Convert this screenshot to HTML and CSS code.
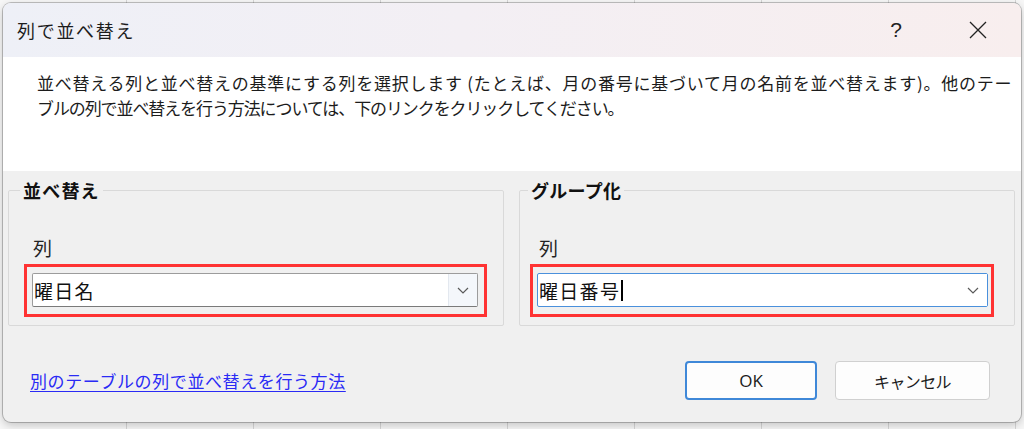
FILE: index.html
```html
<!DOCTYPE html>
<html lang="ja">
<head>
<meta charset="utf-8">
<title>列で並べ替え</title>
<link rel="stylesheet" href="styles.css">
</head>
<body>
<div class="screen">
  <div class="dialog">
    <div class="titlebar">
      <span class="title">列で並べ替え</span>
      <span class="help">?</span>
      <span class="close">
        <svg width="18" height="18" viewBox="0 0 18 18"><path d="M1 1 L17 17 M17 1 L1 17" stroke="#222" stroke-width="1.3" fill="none"/></svg>
      </span>
    </div>
    <div class="desc">
      <p>並べ替える列と並べ替えの基準にする列を選択します (たとえば、月の番号に基づいて月の名前を並べ替えます)。他のテー<br><span class="tight">ブルの列で並べ替えを行う方法については、下のリンクをクリックしてください。</span></p>
    </div>
    <div class="body">
      <div class="groups">
        <section class="group group-sort">
          <h2 class="group-title">並べ替え</h2>
          <div class="field-label">列</div>
          <div class="highlight">
            <div class="combo">
              <span class="combo-text">曜日名</span>
              <span class="combo-btn">
                <svg width="12" height="7" viewBox="0 0 12 7"><polyline points="1,1 6,6 11,1" stroke="#5a5a5a" stroke-width="1.2" fill="none"/></svg>
              </span>
            </div>
          </div>
        </section>
        <section class="group group-by">
          <h2 class="group-title">グループ化</h2>
          <div class="field-label">列</div>
          <div class="highlight">
            <div class="combo combo-focus">
              <span class="combo-text">曜日番号<span class="caret"></span></span>
              <span class="combo-btn">
                <svg width="12" height="7" viewBox="0 0 12 7"><polyline points="1,1 6,6 11,1" stroke="#5a5a5a" stroke-width="1.2" fill="none"/></svg>
              </span>
            </div>
          </div>
        </section>
      </div>
      <div class="footer">
        <a class="link" href="#">別のテーブルの列で並べ替えを行う方法</a>
        <div class="buttons">
          <button class="btn btn-ok">OK</button>
          <button class="btn btn-cancel">キャンセル</button>
        </div>
      </div>
    </div>
  </div>
</div>
</body>
</html>
```

FILE: styles.css
```css
* { box-sizing: border-box; }
html, body { margin: 0; padding: 0; }
body {
  width: 1024px;
  height: 429px;
  overflow: hidden;
  font-family: "Noto Sans CJK JP", "Noto Sans", sans-serif;
  color: #1a1a1a;
}
.screen {
  width: 1024px;
  height: 429px;
  padding: 3px 3px 7px 3px;
  background-color: #f7f7f7;
  background-image: repeating-linear-gradient(90deg, transparent 0, transparent 126px, #d6d6d6 126px, #d6d6d6 127px);
}
.dialog {
  width: 1018px;
  height: 419px;
  display: flex;
  flex-direction: column;
  border-radius: 8px;
  overflow: hidden;
  background: #f0f0f0;
  box-shadow: 0 0 0 1px rgba(0,0,0,0.22), 0 3px 10px rgba(0,0,0,0.22);
}
.titlebar {
  height: 54px;
  flex: none;
  display: flex;
  align-items: center;
  background: linear-gradient(90deg, #eef0f7 0%, #f3eff4 45%, #f8eeee 100%);
}
.title {
  padding-left: 14px;
  font-size: 18px;
  letter-spacing: 1.7px;
  line-height: 24px;
  color: #1c1c1c;
}
.help {
  margin-left: auto;
  width: 46px;
  margin-right: 36px;
  text-align: center;
  font-family: "Liberation Sans", sans-serif;
  font-size: 21px;
  line-height: 24px;
  color: #222;
}
.close {
  width: 46px;
  margin-right: 20px;
  display: flex;
  justify-content: center;
  align-items: center;
}
.desc {
  height: 114px;
  flex: none;
  background: #ffffff;
  padding: 13px 0 0 34px;
}
.desc p {
  margin: 0;
  font-size: 17px;
  line-height: 25px;
  letter-spacing: 0.75px;
  white-space: nowrap;
  color: #1c1c1c;
}
.desc .tight {
  letter-spacing: -1.1px;
}
.body {
  flex: 1;
  padding: 0 6px 0 5px;
  display: flex;
  flex-direction: column;
}
.groups {
  display: flex;
  gap: 15px;
  margin-top: 19px;
}
.group {
  width: 496px;
  height: 136px;
  border: 1px solid #d9d9d9;
  border-radius: 2px;
  display: flex;
  flex-direction: column;
  align-items: flex-start;
}
.group-title {
  margin: -13px 0 0 11px;
  padding: 0 3px;
  background: #f0f0f0;
  font-size: 18px;
  line-height: 24px;
  font-weight: bold;
  letter-spacing: 1.2px;
  color: #111;
}
.group-by .group-title {
  margin-left: 8px;
  letter-spacing: 0.3px;
}
.field-label {
  margin-top: 34px;
  padding-left: 24px;
  font-size: 19px;
  line-height: 24px;
  color: #222;
}
.group-by .field-label { padding-left: 19px; }
.highlight {
  margin: 4px 0 0 15px;
  width: 463px;
  border: 3px solid #ff3333;
  padding: 6px 6px 7px 5px;
}
.group-by .highlight {
  margin-left: 10px;
  width: 464px;
  padding: 6px 3px 7px 4px;
}
.combo {
  height: 34px;
  display: flex;
  align-items: stretch;
  background: #fff;
  border: 1px solid #9c9c9c;
  border-bottom-color: #7a7a7a;
  border-radius: 2px;
}
.combo-focus {
  border: 1px solid #4a90dc;
}
.combo-text {
  flex: 1;
  display: flex;
  align-items: center;
  padding-left: 1px;
  font-size: 19px;
  letter-spacing: 1.3px;
  color: #111;
}
.caret {
  width: 1.5px;
  height: 21px;
  background: #000;
  margin-left: 1px;
}
.combo-btn {
  width: 29px;
  display: flex;
  align-items: center;
  justify-content: center;
  background: #f4f7fb;
  border-left: 1px solid #e3e8ef;
}
.combo-focus .combo-btn {
  background: #fff;
  border-left: none;
  width: 28px;
}
.footer {
  margin-top: 35px;
  height: 39px;
  display: flex;
  align-items: center;
}
.link {
  margin-left: 22px;
  font-size: 17px;
  letter-spacing: 0.6px;
  line-height: 24px;
  color: #2a2af5;
  text-decoration: underline;
  text-underline-offset: 3px;
}
.buttons {
  margin-left: auto;
  margin-right: 25px;
  display: flex;
  gap: 18px;
}
.btn {
  height: 39px;
  border: 1px solid #d0d0d0;
  border-radius: 4px;
  background: #fdfdfd;
  font-family: "Noto Sans CJK JP", "Noto Sans", sans-serif;
  font-size: 16px;
  color: #1a1a1a;
  padding: 0;
}
.btn-ok {
  width: 132px;
  border: 2px solid #3f88d8;
  font-family: "Open Sans", "Noto Sans", sans-serif;
  font-size: 17px;
}
.btn-cancel {
  width: 155px;
  letter-spacing: -0.6px;
}
```
